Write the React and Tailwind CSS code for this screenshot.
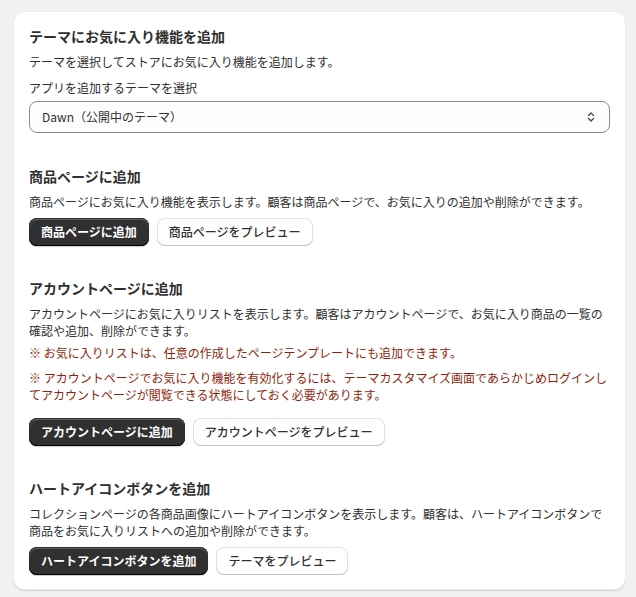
import React from "react";

const font = {
  fontFamily: '"Noto Sans CJK JP", "Noto Sans", sans-serif',
};

function PrimaryButton({ children }) {
  return (
    <button className="h-7 px-3 rounded-lg bg-[#303030] text-white text-[12px] font-bold leading-none shadow-[inset_0_-1px_0_0_#000,inset_0_0_0_1px_#303030,inset_0_1px_0_1px_rgba(255,255,255,0.22),0_1px_1px_rgba(0,0,0,0.2)]">
      {children}
    </button>
  );
}

function SecondaryButton({ children }) {
  return (
    <button className="h-7 px-3 rounded-lg bg-white text-[#303030] text-[12px] font-medium leading-none shadow-[inset_0_-1px_0_0_#c5c5c5,inset_0_0_0_1px_#e3e3e3]">
      {children}
    </button>
  );
}

function Heading({ children, className = "" }) {
  return (
    <h2 className={"text-[14px] leading-5 font-semibold text-[#303030] " + className}>
      {children}
    </h2>
  );
}

function Body({ children, className = "" }) {
  return (
    <p className={"text-[12px] leading-[17px] text-[#303030] " + className}>{children}</p>
  );
}

export default function App() {
  return (
    <div className="min-h-[597px] bg-[#f1f1f1] pt-[11px] pl-[13px]" style={font}>
      <div className="w-[613px] rounded-xl bg-white px-4 pt-[15px] pb-[15px] shadow-[0_1px_0_0_rgba(0,0,0,0.12),inset_0_0_0_1px_rgba(0,0,0,0.07)]">
        {/* Section 1 */}
        <section>
          <Heading>テーマにお気に入り機能を追加</Heading>
          <Body className="mt-[7px]">テーマを選択してストアにお気に入り機能を追加します。</Body>
          <Body className="mt-[9px]">アプリを追加するテーマを選択</Body>
          <div className="mt-[5px] h-8 rounded-lg border border-[#8a8a8a] bg-[#fdfdfd] flex items-center justify-between pl-3 pr-[10px]">
            <span className="text-[12px] text-[#303030]">Dawn（公開中のテーマ）</span>
            <svg width="16" height="16" viewBox="0 0 16 16" fill="none" stroke="#4a4a4a" strokeWidth="1.3" strokeLinecap="round" strokeLinejoin="round">
              <path d="M5.5 6.5 8 4l2.5 2.5" />
              <path d="M5.5 9.5 8 12l2.5-2.5" />
            </svg>
          </div>
        </section>

        {/* Section 2 */}
        <section className="mt-[33px]">
          <Heading>商品ページに追加</Heading>
          <Body className="mt-[7px]">
            商品ページにお気に入り機能を表示します。顧客は商品ページで、お気に入りの追加や削除ができます。
          </Body>
          <div className="mt-2 flex gap-2">
            <PrimaryButton>商品ページに追加</PrimaryButton>
            <SecondaryButton>商品ページをプレビュー</SecondaryButton>
          </div>
        </section>

        {/* Section 3 */}
        <section className="mt-8">
          <Heading>アカウントページに追加</Heading>
          <Body className="mt-[7px]">
            アカウントページにお気に入りリストを表示します。顧客はアカウントページで、お気に入り商品の一覧の
            <br />
            確認や追加、削除ができます。
          </Body>
          <p className="mt-[5px] text-[12px] leading-[17px] text-[#8e1f0b]">
            ※ お気に入りリストは、任意の作成したページテンプレートにも追加できます。
          </p>
          <p className="mt-2 text-[12px] leading-[17px] text-[#8e1f0b]">
            ※ アカウントページでお気に入り機能を有効化するには、テーマカスタマイズ画面であらかじめログインし
            <br />
            てアカウントページが閲覧できる状態にしておく必要があります。
          </p>
          <div className="mt-[15px] flex gap-2">
            <PrimaryButton>アカウントページに追加</PrimaryButton>
            <SecondaryButton>アカウントページをプレビュー</SecondaryButton>
          </div>
        </section>

        {/* Section 4 */}
        <section className="mt-8">
          <Heading>ハートアイコンボタンを追加</Heading>
          <Body className="mt-[7px]">
            コレクションページの各商品画像にハートアイコンボタンを表示します。顧客は、ハートアイコンボタンで
            <br />
            商品をお気に入りリストへの追加や削除ができます。
          </Body>
          <div className="mt-2 flex gap-2">
            <PrimaryButton>ハートアイコンボタンを追加</PrimaryButton>
            <SecondaryButton>テーマをプレビュー</SecondaryButton>
          </div>
        </section>
      </div>
    </div>
  );
}
